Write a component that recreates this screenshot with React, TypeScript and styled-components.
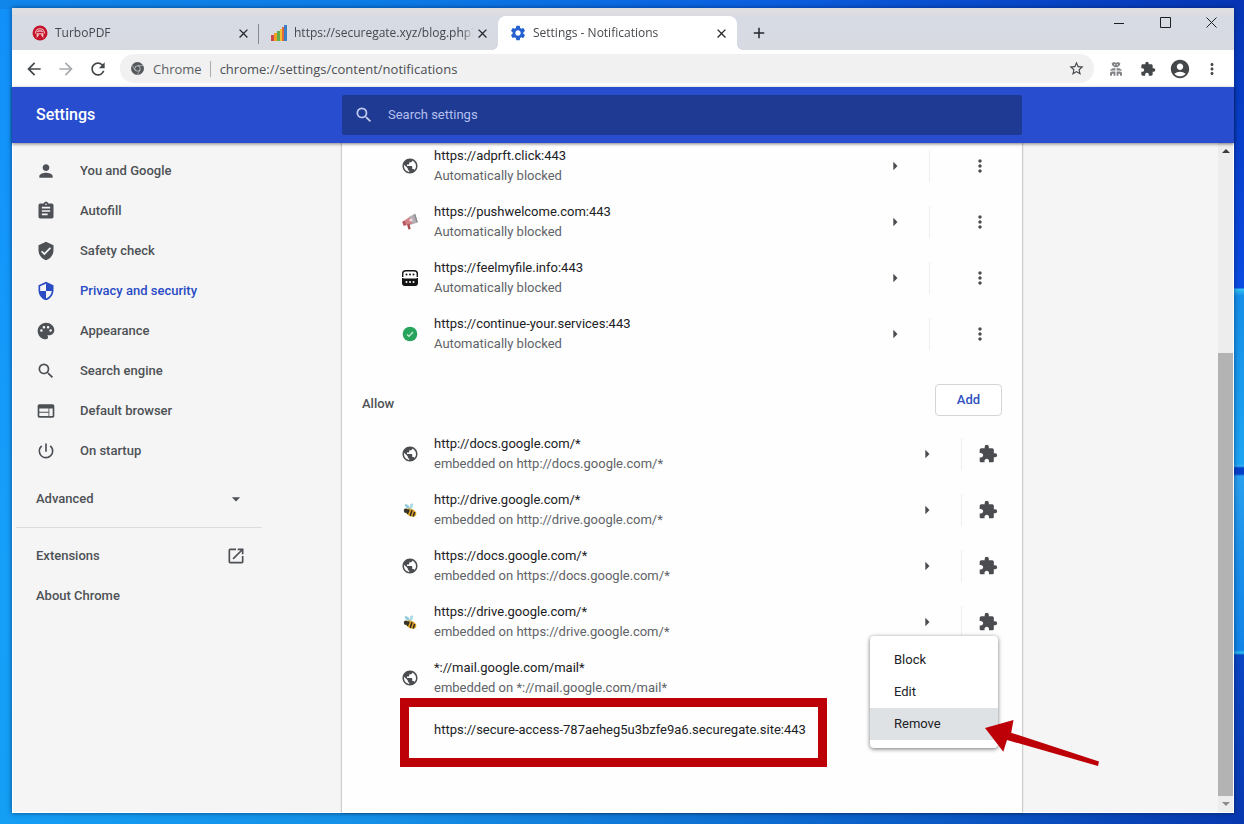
import React from "react";
import styled, { createGlobalStyle, css } from "styled-components";
import {
  MdAccountCircle,
  MdAdd,
  MdArrowBack,
  MdArrowDropDown,
  MdArrowForward,
  MdArrowRight,
  MdAssignment,
  MdClose,
  MdExtension,
  MdMoreVert,
  MdOpenInNew,
  MdPalette,
  MdPerson,
  MdPowerSettingsNew,
  MdPublic,
  MdRefresh,
  MdSearch,
  MdSecurity,
  MdSettings,
  MdStarBorder,
  MdVerifiedUser,
  MdWeb,
} from "react-icons/md";

const systemFont = `"Open Sans", "Noto Sans", sans-serif`;
const pageFont = `Roboto, "Liberation Sans", sans-serif`;

const GlobalStyle = createGlobalStyle`
  * { box-sizing: border-box; }
  body { margin: 0; font-family: ${pageFont}; font-size: 13px; line-height: 20px; color: #202124; }
  button { font: inherit; color: inherit; background: none; border: 0; padding: 0; }
  a { color: inherit; text-decoration: none; }
  svg { display: block; flex: none; }
  h1, h2, ul { margin: 0; padding: 0; }
  ul { list-style: none; }
`;

/* ---------- desktop and window ---------- */

const Desktop = styled.div`
  display: flex;
  min-height: 100vh;
  padding: 8px 10px 11px 12px;
  background:
    linear-gradient(180deg, #0634b4 0, #0a4be2 288px, #35c4f4 289px, #168fe8 296px, #1da4f2 464px, #35b4f4 466px, #0540c8 468px, #0540c8 474px, #2aa0f0 476px, #1a8fea 560px, #1284e8 650px, #2cc0f0 653px, #0a46c4 655px, #0838b0 100%) right / 11px 100% no-repeat,
    linear-gradient(90deg, #1086ea, #0c7ce6 30%, #0b5fe0 62%, #0634b4) top / 100% 9px no-repeat,
    linear-gradient(90deg, #149ef4, #1590e6 30%, #0c66cc 66%, #0838b0) bottom / 100% 12px no-repeat,
    linear-gradient(180deg, #1290fa, #16a0fa 70%, #149ef4);
`;

const Window = styled.div`
  display: flex;
  flex: 1;
  flex-direction: column;
  min-width: 0;
  background: #fff;
  box-shadow: 0 0 5px rgba(0, 20, 60, 0.6);
`;

const TitleBar = styled.header`
  display: flex;
  align-items: flex-start;
  padding-left: 8px;
  background: linear-gradient(180deg, #dedde0 6px, #d7dbe4 8px, #d7dae1);
  font-family: ${systemFont};
  font-size: 12px;
`;

const Tabs = styled.div`
  display: flex;
  flex: 1;
  align-items: center;
  min-width: 0;
  padding-top: 8px;
`;

const Tab = styled.div<{ $active?: boolean; $divided?: boolean }>`
  position: relative;
  display: flex;
  flex: 0 1 239px;
  align-items: center;
  height: 34px;
  min-width: 0;
  padding: 0 7px 0 12px;
  color: #45494d;
  ${(p) =>
    p.$divided &&
    css`
      &::after {
        content: "";
        position: absolute;
        right: 0;
        top: 8px;
        width: 1px;
        height: 20px;
        background: #858a91;
      }
    `}
  ${(p) =>
    p.$active &&
    css`
      background: #fff;
      border-radius: 8px 8px 0 0;
      &::before,
      &::after {
        content: "";
        position: absolute;
        bottom: 0;
        width: 6px;
        height: 6px;
      }
      &::before {
        right: 100%;
        background: radial-gradient(circle at 0 0, transparent 6px, #fff 6px);
      }
      &::after {
        left: 100%;
        background: radial-gradient(circle at 100% 0, transparent 6px, #fff 6px);
      }
    `}
`;

const TabIcon = styled.span`
  display: flex;
  justify-content: center;
  width: 16px;
  margin-right: 7px;
`;

const TabTitle = styled.button`
  flex: 1;
  min-width: 0;
  overflow: hidden;
  text-align: left;
  white-space: nowrap;
  mask-image: linear-gradient(90deg, #000 calc(100% - 12px), transparent);
`;

const TabClose = styled.button`
  display: flex;
  align-items: center;
  justify-content: center;
  width: 17px;
  height: 17px;
  color: #25282b;
`;

const NewTab = styled.button`
  display: grid;
  place-items: center;
  width: 28px;
  height: 28px;
  margin-left: 8px;
  color: #25282b;
`;

const WindowControl = styled.button`
  display: grid;
  place-items: center;
  width: 46px;
  height: 29px;
  color: #1c1e20;
`;

const Toolbar = styled.nav`
  display: flex;
  align-items: center;
  height: 37px;
  padding: 0 6px;
  font-family: ${systemFont};
`;

const ToolButton = styled.button<{ $faded?: boolean }>`
  display: grid;
  place-items: center;
  width: 32px;
  height: 32px;
  color: ${(p) => (p.$faded ? "#a8abae" : "#44474a")};
`;

const Omnibox = styled.div`
  display: flex;
  flex: 1;
  align-items: center;
  height: 29px;
  min-width: 0;
  margin: 0 6px;
  padding: 0 9px 0 11px;
  border-radius: 14px;
  background: #f1f1f2;
  color: #5a5d61;
`;

const SiteLabel = styled.label`
  margin-left: 9px;
  padding-right: 8px;
  border-right: 1px solid #a9acb0;
  line-height: 16px;
`;

const AddressInput = styled.input`
  flex: 1;
  min-width: 0;
  padding: 0 0 0 9px;
  border: 0;
  outline: 0;
  background: none;
  color: #4c4f53;
  font: inherit;
`;

/* ---------- settings page ---------- */

const AppBar = styled.header`
  position: relative;
  z-index: 1;
  display: flex;
  align-items: center;
  padding: 8px 0;
  background: #284dcf;
  box-shadow: 0 1px 3px rgba(0, 0, 0, 0.5);
`;

const AppTitle = styled.h1`
  flex: 0 0 330px;
  padding-left: 24px;
  color: #fff;
  font-size: 16px;
  font-weight: 500;
`;

const SearchBox = styled.label`
  display: flex;
  flex: 0 1 680px;
  align-items: center;
  gap: 14px;
  height: 40px;
  min-width: 0;
  padding: 0 12px;
  border-radius: 2px;
  background: #1f3a93;
  color: #c3cdf2;
`;

const SearchInput = styled.input`
  flex: 1;
  min-width: 0;
  padding: 0;
  border: 0;
  outline: 0;
  background: none;
  color: inherit;
  font: inherit;
  &::placeholder { color: #b4c0ee; opacity: 1; }
`;

const Body = styled.div`
  display: flex;
  flex: 1;
  background: #f5f5f5;
  box-shadow: inset 0 0 0 1px #fff;
`;

const Sidebar = styled.nav`
  flex: 0 0 330px;
  padding-top: 8px;
  color: #4d5156;
  font-weight: 500;
`;

const NavItem = styled.a<{ $selected?: boolean }>`
  display: flex;
  align-items: center;
  gap: 24px;
  height: 40px;
  padding-left: 24px;
  color: ${(p) => (p.$selected ? "#2a4bc4" : "inherit")};
`;

const NavToggle = styled.button`
  display: flex;
  align-items: center;
  justify-content: space-between;
  width: 234px;
  height: 40px;
  margin-top: 8px;
  padding-left: 24px;
`;

const NavLink = styled.a`
  display: flex;
  align-items: center;
  justify-content: space-between;
  width: 234px;
  height: 40px;
  padding-left: 24px;
`;

const NavDivider = styled.hr`
  width: 246px;
  height: 1px;
  margin: 8px 4px;
  border: 0;
  background: #dcdcdc;
`;

/* The list is scrolled, so its first row starts under the app bar. */
const Card = styled.main`
  flex: 0 1 680px;
  min-width: 0;
  margin-top: -5px;
  background: #fefefe;
  box-shadow: 0 0 2px rgba(0, 0, 0, 0.5);
`;

const SiteRow = styled.li`
  position: relative;
  display: flex;
  align-items: center;
  height: 56px;
  padding-left: 60px;
`;

const Favicon = styled.span`
  display: flex;
  justify-content: center;
  width: 16px;
  margin-right: 16px;
  color: #4a4c50;
`;

const SiteText = styled.div`
  flex: 1;
  min-width: 0;
  overflow: hidden;
  white-space: nowrap;
`;

const SiteNote = styled.div`
  color: #606367;
`;

const IconButton = styled.button`
  display: grid;
  place-items: center;
  width: 36px;
  height: 36px;
  color: #4a4c50;
`;

const RowEnd = styled.div<{ $wide?: boolean }>`
  display: flex;
  align-items: center;
  height: 32px;
  margin-left: 16px;
  padding: 0 24px 0 ${(p) => (p.$wide ? 32 : 16)}px;
  border-left: 1px solid #eeeeee;
  color: #4a4c50;
`;

const AllowHeader = styled.div`
  display: flex;
  align-items: center;
  justify-content: space-between;
  padding: 22px 20px 10px;
`;

const AllowTitle = styled.h2`
  padding-top: 8px;
  color: #4d5156;
  font-size: 13px;
  font-weight: 500;
`;

const AddButton = styled.button`
  width: 67px;
  height: 32px;
  border: 1px solid #d3d5d8;
  border-radius: 4px;
  background: #fff;
  color: #2f52c2;
  font-weight: 500;
`;

const FlaggedRow = styled.li`
  position: relative;
  display: flex;
  align-items: center;
  height: 48px;
  margin-bottom: 59px;
  padding-left: 92px;
`;

const Highlight = styled.span`
  position: absolute;
  top: -8px;
  left: 58px;
  width: 427px;
  height: 69px;
  border: 9px solid #bd0008;
`;

const Menu = styled.div`
  position: absolute;
  top: -70px;
  right: 24px;
  width: 128px;
  padding: 8px 0;
  border-radius: 4px;
  background: #fff;
  box-shadow: 0 1px 4px rgba(0, 0, 0, 0.55);
`;

const MenuItem = styled.button<{ $hovered?: boolean }>`
  display: block;
  width: 100%;
  height: 32px;
  padding-left: 24px;
  background: ${(p) => (p.$hovered ? "#dfe2e5" : "none")};
  text-align: left;
`;

const Pointer = styled.svg`
  position: absolute;
  top: 12px;
  right: -78px;
`;

const Spacer = styled.div`
  flex: 1;
`;

const Scrollbar = styled.div`
  display: flex;
  flex: 0 0 15px;
  flex-direction: column;
  margin: 0 1px 1px 0;
  background: #ededed;
`;

const ScrollArrow = styled.button<{ $faded?: boolean }>`
  display: grid;
  place-items: center;
  height: 16px;
  color: ${(p) => (p.$faded ? "#8b8b8b" : "#3c3c3c")};
`;

const ScrollSpace = styled.div`
  flex: 194;
`;

const ScrollThumb = styled.div`
  flex: 444;
  background: #b3b3b3;
`;

/* ---------- drawings ---------- */

const TurboIcon = () => (
  <svg width="16" height="16" viewBox="0 0 16 16">
    <circle cx="8" cy="8" r="7.5" fill="#c4152b" />
    <g fill="none" stroke="#f7c9ce" strokeWidth="1.1">
      <path d="M3.6 8.400C3.600 5.400 5.800 3.700 8 3.700s4.400 1.700 4.400 4.700" />
      <path d="M5.400 6.800c1-1.200 4.200-1.200 5.200 0M4.600 8.800h6.800M5.200 9v2.400l1.400-1.800M10.800 9v2.400L9.400 9.600" />
    </g>
  </svg>
);

const ChartIcon = () => (
  <svg width="16" height="16" viewBox="0 0 16 16">
    <path d="M0 10h3v6H0z" fill="#c84a4a" />
    <path d="M3 8h3v8H3z" fill="#f0a020" />
    <path d="M6 6h3v10H6z" fill="#5fae4c" />
    <path d="M9 4h2v12H9z" fill="#f2c230" />
    <path d="M11 2h2v14h-2z" fill="#e2673a" />
    <path d="M13 0h3v16h-3z" fill="#3b7fc4" />
  </svg>
);

const ChromeIcon = () => (
  <svg width="13" height="13" viewBox="0 0 24 24">
    <circle cx="12" cy="12" r="12" fill="#55585c" />
    <circle cx="12" cy="12" r="5.600" fill="#c9cacc" />
    <circle cx="12" cy="12" r="4.200" fill="#55585c" />
    <path d="M12 6.400h11M7.200 14.800 1.600 5.400M16.800 14.800 11.400 24" stroke="#c9cacc" strokeWidth="1.200" />
  </svg>
);

const PawIcon = () => (
  <svg width="16" height="16" viewBox="0 0 16 16" fill="#808285">
    <path d="M3.600 2.400 5.600 1 8 1.800 10.400 1l2 1.400-.600 1.800L9.600 6.200H6.400L4.200 4.200z" />
    <path d="M2 9 4.600 7.200h2.800V9.600H2zM14 9l-2.600-1.800H8.600v2.400H14z" />
    <path d="M2 14.800v-3l1.600-1.400h3.800v4.400H5.600v-2H4v2zM14 14.800v-3l-1.600-1.400H8.600v4.400h1.800v-2H12v2z" />
    <path d="M6 3.200h1.200v1H6zM8.800 3.200H10v1H8.800z" fill="#fff" />
  </svg>
);

const MegaphoneIcon = () => (
  <svg width="18" height="18" viewBox="0 0 18 18">
    <path d="m8 4 6-3.500 2.800 9L9 12z" fill="#b5aeb4" />
    <path d="M13.800 1.500 16 9" stroke="#8e8a92" strokeWidth="1.400" />
    <path d="M2 8.500 8.500 4l3 6.500-8 2z" fill="#cf8288" />
    <path d="M1.200 8.800 3.600 7.600l1.600 4.600-2.600.600z" fill="#b8545c" />
    <path d="m6 11.500 2.600-.800 1 5.300-2.200.600z" fill="#a84a52" />
    <circle cx="10" cy="7" r="1.600" fill="#f3dcdc" />
  </svg>
);

const PasswordIcon = () => (
  <svg width="18" height="18" viewBox="0 0 18 18">
    <rect x="1.700" y="1.700" width="14.600" height="14.600" rx="3" fill="#fff" stroke="#151515" strokeWidth="1.400" />
    <path d="M1 9.500h16v4a3.500 3.500 0 0 1-3.500 3.500h-9A3.500 3.500 0 0 1 1 13.500z" fill="#151515" />
    <path d="M1 8.500h16" stroke="#fff" />
    <g fill="#151515">
      <circle cx="5.500" cy="5.500" r="1" />
      <circle cx="9" cy="5.500" r="1" />
      <circle cx="12.500" cy="5.500" r="1" />
    </g>
    <g fill="#fff">
      <circle cx="5.500" cy="13" r="1" />
      <circle cx="9" cy="13" r="1" />
      <circle cx="12.500" cy="13" r="1" />
    </g>
  </svg>
);

const CheckIcon = () => (
  <svg width="16" height="16" viewBox="0 0 16 16">
    <circle cx="8" cy="8" r="7.300" fill="#27a35c" />
    <path d="m5 8.400 2 1.900 4-4.300" fill="none" stroke="#c4ecd5" strokeWidth="1.400" />
  </svg>
);

const BeeIcon = () => (
  <svg width="16" height="16" viewBox="0 0 16 16">
    <path d="M8.500 7.500C5 6.500 2 4 3 2.200 5 1.500 7.500 4 8.500 7.500z" fill="#8fcbd8" />
    <path d="M8.300 7.200C7.500 4 8 1.200 10 1.200c2 1 1 4-1 6z" fill="#a9dce6" />
    <ellipse cx="9" cy="10.600" rx="5.600" ry="3.800" transform="rotate(25 9 10.600)" fill="#dfa62c" />
    <path d="M7 7.600 5.400 12M10 8.200l-1.800 5.600M12.600 10l-1.400 4.400" stroke="#2c2620" strokeWidth="1.500" />
    <circle cx="4" cy="8.800" r="2.200" fill="#3a3329" />
  </svg>
);

/* ---------- data ---------- */

const navItems = [
  { label: "You and Google", icon: MdPerson },
  { label: "Autofill", icon: MdAssignment },
  { label: "Safety check", icon: MdVerifiedUser },
  { label: "Privacy and security", icon: MdSecurity, selected: true },
  { label: "Appearance", icon: MdPalette },
  { label: "Search engine", icon: MdSearch },
  { label: "Default browser", icon: MdWeb },
  { label: "On startup", icon: MdPowerSettingsNew },
];

const globe = <MdPublic size={18} />;

const blockedSites = [
  { url: "https://adprft.click:443", icon: globe },
  { url: "https://pushwelcome.com:443", icon: <MegaphoneIcon /> },
  { url: "https://feelmyfile.info:443", icon: <PasswordIcon /> },
  { url: "https://continue-your.services:443", icon: <CheckIcon /> },
];

const allowedSites = [
  { url: "http://docs.google.com/*", icon: globe },
  { url: "http://drive.google.com/*", icon: <BeeIcon /> },
  { url: "https://docs.google.com/*", icon: globe },
  { url: "https://drive.google.com/*", icon: <BeeIcon /> },
  { url: "*://mail.google.com/mail*", icon: globe },
];

type BrowserTabProps = { title: string; icon: React.ReactNode; active?: boolean; divided?: boolean };

const BrowserTab = ({ title, icon, active, divided }: BrowserTabProps) => (
  <Tab $active={active} $divided={divided}>
    <TabIcon>{icon}</TabIcon>
    <TabTitle>{title}</TabTitle>
    <TabClose aria-label="Close tab">
      <MdClose size={15} />
    </TabClose>
  </Tab>
);

export default function App() {
  return (
    <Desktop>
      <GlobalStyle />
      <Window>
        <TitleBar>
          <Tabs>
            <BrowserTab title="TurboPDF" icon={<TurboIcon />} divided />
            <BrowserTab title="https://securegate.xyz/blog.php?" icon={<ChartIcon />} />
            <BrowserTab title="Settings - Notifications" icon={<MdSettings size={18} color="#2460d0" />} active />
            <NewTab aria-label="New tab">
              <MdAdd size={18} />
            </NewTab>
          </Tabs>
          <WindowControl aria-label="Minimize">
            <svg width="10" height="10" viewBox="0 0 10 10" stroke="currentColor">
              <path d="M0 5.500h10" />
            </svg>
          </WindowControl>
          <WindowControl aria-label="Maximize">
            <svg width="11" height="11" viewBox="0 0 11 11" fill="none" stroke="currentColor">
              <path d="M.500 .500h10v10h-10z" />
            </svg>
          </WindowControl>
          <WindowControl aria-label="Close">
            <svg width="11" height="11" viewBox="0 0 11 11" stroke="currentColor">
              <path d="m.500 .500 10 10m0-10-10 10" />
            </svg>
          </WindowControl>
        </TitleBar>

        <Toolbar>
          <ToolButton aria-label="Back"><MdArrowBack size={20} /></ToolButton>
          <ToolButton aria-label="Forward" $faded><MdArrowForward size={20} /></ToolButton>
          <ToolButton aria-label="Reload"><MdRefresh size={20} /></ToolButton>
          <Omnibox>
            <ChromeIcon />
            <SiteLabel htmlFor="address">Chrome</SiteLabel>
            <AddressInput id="address" defaultValue="chrome://settings/content/notifications" />
            <button aria-label="Bookmark this page"><MdStarBorder size={17} color="#44474a" /></button>
          </Omnibox>
          <ToolButton aria-label="Extension"><PawIcon /></ToolButton>
          <ToolButton aria-label="Extensions"><MdExtension size={16} /></ToolButton>
          <ToolButton aria-label="Profile"><MdAccountCircle size={22} /></ToolButton>
          <ToolButton aria-label="Menu"><MdMoreVert size={18} /></ToolButton>
        </Toolbar>

        <AppBar>
          <AppTitle>Settings</AppTitle>
          <SearchBox>
            <MdSearch size={20} />
            <SearchInput type="text" placeholder="Search settings" aria-label="Search settings" />
          </SearchBox>
        </AppBar>

        <Body>
          <Sidebar>
            {navItems.map(({ label, icon: Icon, selected }) => (
              <NavItem key={label} href="#" $selected={selected}>
                <Icon size={20} />
                {label}
              </NavItem>
            ))}
            <NavToggle>
              Advanced
              <MdArrowDropDown size={20} />
            </NavToggle>
            <NavDivider />
            <NavLink href="#">
              Extensions
              <MdOpenInNew size={20} />
            </NavLink>
            <NavLink href="#">About Chrome</NavLink>
          </Sidebar>

          <Card>
            <ul>
              {blockedSites.map((site) => (
                <SiteRow key={site.url}>
                  <Favicon>{site.icon}</Favicon>
                  <SiteText>
                    {site.url}
                    <SiteNote>Automatically blocked</SiteNote>
                  </SiteText>
                  <IconButton aria-label="Site details"><MdArrowRight size={20} /></IconButton>
                  <RowEnd $wide>
                    <IconButton aria-label="More actions"><MdMoreVert size={20} /></IconButton>
                  </RowEnd>
                </SiteRow>
              ))}
            </ul>
            <AllowHeader>
              <AllowTitle>Allow</AllowTitle>
              <AddButton>Add</AddButton>
            </AllowHeader>
            <ul>
              {allowedSites.map((site) => (
                <SiteRow key={site.url}>
                  <Favicon>{site.icon}</Favicon>
                  <SiteText>
                    {site.url}
                    <SiteNote>embedded on {site.url}</SiteNote>
                  </SiteText>
                  <IconButton aria-label="Site details"><MdArrowRight size={20} /></IconButton>
                  <RowEnd>
                    <MdExtension size={20} />
                  </RowEnd>
                </SiteRow>
              ))}
              <FlaggedRow>
                https://secure-access-787aeheg5u3bzfe9a6.securegate.site:443
                <Highlight />
                <Menu>
                  <MenuItem>Block</MenuItem>
                  <MenuItem>Edit</MenuItem>
                  <MenuItem $hovered>Remove</MenuItem>
                </Menu>
                <Pointer width="116" height="50" viewBox="0 0 116 50" fill="#bd0008">
                  <path d="M1 10 29.500 2l-2.300 12.700L115 43.500l-1 4.500-91-26-3.700 11.700z" />
                </Pointer>
              </FlaggedRow>
            </ul>
          </Card>
          <Spacer />
          <Scrollbar>
            <ScrollArrow aria-label="Scroll up">
              <svg width="8" height="4" viewBox="0 0 8 4" fill="currentColor"><path d="m0 4 4-4 4 4z" /></svg>
            </ScrollArrow>
            <ScrollSpace />
            <ScrollThumb />
            <ScrollArrow aria-label="Scroll down" $faded>
              <svg width="8" height="4" viewBox="0 0 8 4" fill="currentColor"><path d="m0 0 4 4 4-4z" /></svg>
            </ScrollArrow>
          </Scrollbar>
        </Body>
      </Window>
    </Desktop>
  );
}
